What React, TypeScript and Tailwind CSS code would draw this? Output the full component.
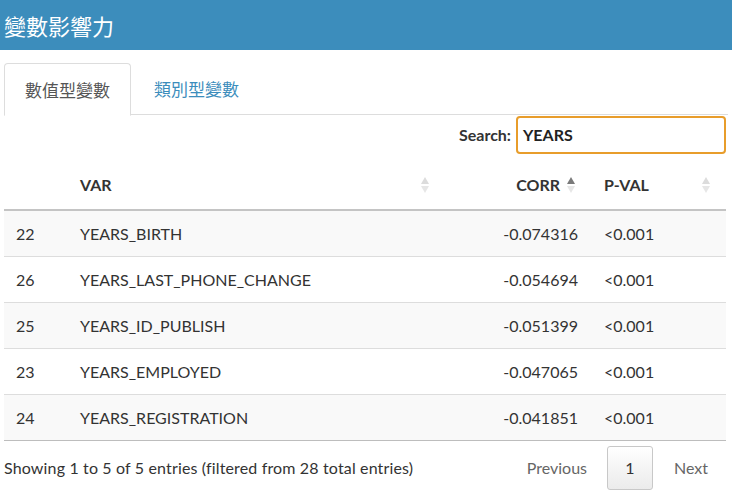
import React from "react";

const rows = [
  ["22", "YEARS_BIRTH", "-0.074316", "<0.001"],
  ["26", "YEARS_LAST_PHONE_CHANGE", "-0.054694", "<0.001"],
  ["25", "YEARS_ID_PUBLISH", "-0.051399", "<0.001"],
  ["23", "YEARS_EMPLOYED", "-0.047065", "<0.001"],
  ["24", "YEARS_REGISTRATION", "-0.041851", "<0.001"],
];

function SortIcon({ active }: { active?: "up" | "down" }) {
  return (
    <svg width="10" height="20" viewBox="0 0 10 20" className="shrink-0">
      <polygon points="5,2 9,9 1,9" fill={active === "up" ? "#7a7a7a" : "#dcdcdc"} />
      <polygon points="5,18 9,11 1,11" fill={active === "down" ? "#7a7a7a" : "#e6e6e6"} />
    </svg>
  );
}

export default function App() {
  const font = { fontFamily: 'Lato, "Noto Sans CJK TC", sans-serif' };
  const cjk = { fontFamily: '"Noto Sans CJK TC", sans-serif' };
  return (
    <div className="w-[732px] h-[501px] bg-white text-[#333] overflow-hidden" style={font}>
      <div className="h-[50px] bg-[#3c8dbc] flex items-center px-[4px]">
        <span className="text-white text-[22px]" style={cjk}>變數影響力</span>
      </div>
      <div className="px-[4px]">
        <div className="mt-[13px] flex border-b border-[#ddd] h-[52px]">
          <div className="w-[127px] h-[53px] border border-[#ddd] border-b-white rounded-t-[4px] bg-white flex items-center justify-center text-[17px] text-[#555]" style={cjk}>
            數值型變數
          </div>
          <div className="h-[52px] pl-[23px] flex items-center text-[17px] text-[#3c8dbc]" style={cjk}>
            類別型變數
          </div>
        </div>
        <div className="w-[722px] flex justify-end items-center mt-[1px] h-[38px]">
          <span className="font-bold text-[16px] mr-[5px]">Search:</span>
          <div className="w-[210px] h-[38px] border-2 border-[#e89d2b] rounded-[4px] flex items-center px-[5px] font-bold text-[16px] text-[#222]">YEARS</div>
        </div>
        <div className="w-[722px] mt-[6px]">
          <div className="grid grid-cols-[62px_374px_150px_136px] h-[51px] border-b-2 border-[#c4c4c4] font-bold text-[16px] items-center">
            <div></div>
            <div className="flex items-center justify-between pl-[14px] pr-[10px]">
              <span>VAR</span>
              <SortIcon />
            </div>
            <div className="flex items-center justify-end pr-[14px] gap-[6px]">
              <span>CORR</span>
              <SortIcon active="up" />
            </div>
            <div className="flex items-center justify-between pl-[14px] pr-[15px]">
              <span>P-VAL</span>
              <SortIcon />
            </div>
          </div>
          {rows.map((r, i) => (
            <div
              key={r[0]}
              className={`grid grid-cols-[62px_374px_150px_136px] h-[46px] items-center text-[16px] ${i % 2 === 0 ? "bg-[#f9f9f9]" : "bg-white"} ${i < rows.length - 1 ? "border-b border-[#ddd]" : "border-b border-[#bdbdbd]"}`}
            >
              <div className="pl-[12px]">{r[0]}</div>
              <div className="pl-[14px]">{r[1]}</div>
              <div className="text-right pr-[12px]">{r[2]}</div>
              <div className="pl-[14px]">{r[3]}</div>
            </div>
          ))}
        </div>
        <div className="w-[722px] flex items-center justify-between mt-[5px]">
          <span className="text-[16px] tracking-[0.15px]">Showing 1 to 5 of 5 entries (filtered from 28 total entries)</span>
          <div className="flex items-center text-[16px] text-[#666]">
            <span className="mr-[20px]">Previous</span>
            <div className="w-[46px] h-[44px] border border-[#c8c8c8] rounded-[3px] bg-gradient-to-b from-white to-[#ebebeb] flex items-center justify-center text-[#333]">1</div>
            <span className="ml-[21px] mr-[18px]">Next</span>
          </div>
        </div>
      </div>
    </div>
  );
}
